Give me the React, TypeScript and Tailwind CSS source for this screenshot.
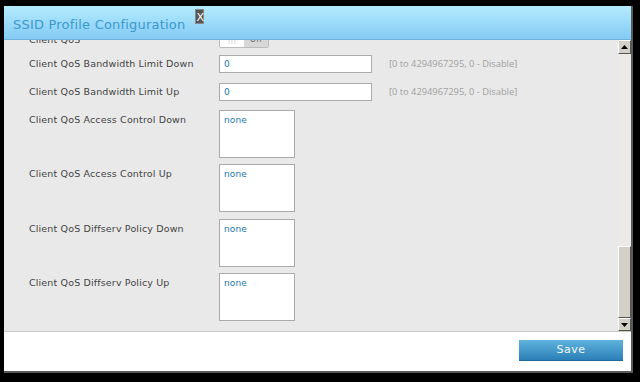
import React from 'react';

const font = { fontFamily: '"DejaVu Sans", Verdana, sans-serif' };

const textRows = [
  { label: 'Client QoS Bandwidth Limit Down', value: '0', mt: 'mt-[3px]' },
  { label: 'Client QoS Bandwidth Limit Up', value: '0', mt: 'mt-[10px]' },
];

const boxRows = [
  { label: 'Client QoS Access Control Down', mt: 'mt-[9px]' },
  { label: 'Client QoS Access Control Up', mt: 'mt-[6px]' },
  { label: 'Client QoS Diffserv Policy Down', mt: 'mt-[7px]' },
  { label: 'Client QoS Diffserv Policy Up', mt: 'mt-[6px]' },
];

function Arrow({ up }: { up?: boolean }) {
  return (
    <svg width="7" height="4" viewBox="0 0 7 4">
      {up ? <polygon points="3.5,0 7,4 0,4" fill="#000" /> : <polygon points="0,0 7,0 3.5,4" fill="#000" />}
    </svg>
  );
}

export default function App() {
  return (
    <div className="w-[640px] h-[382px] bg-black pt-[6px] pl-[4px]" style={font}>
      <div className="w-[629px] h-[367px] flex flex-col bg-white border-r-2 border-b-2 border-[#5a5a5a]">
        {/* Title bar */}
        <div className="h-[34px] flex items-start bg-gradient-to-b from-[#b4ecfe] to-[#84caf4] border-b border-[#6fb3dc]">
          <span className="ml-[9px] mt-[10px] text-[13px] leading-[17px] tracking-[0.2px] text-[#3b99cf]">
            SSID Profile Configuration
          </span>
          <span className="ml-[10px] mt-[3px] w-[9px] h-[15px] bg-[#555] text-white text-[11px] leading-[15px] text-center border border-[#888]">
            X
          </span>
        </div>

        {/* Scroll area */}
        <div className="flex h-[292px] bg-[#e9e9e9] border-b border-[#c8c8c8]">
          <div className="flex-1 overflow-hidden">
            <div className="-mt-[12px] pl-[25px] flex flex-col text-[9.5px] text-[#444] tracking-[0.15px]">
              <div className="h-[24px] flex items-center">
                <span className="w-[190px]">Client QoS</span>
                <div className="flex h-[16px] border border-[#bbb] rounded-[2px] overflow-hidden">
                  <span className="w-[24px] bg-white text-[#ccc] text-[8px] leading-[14px] text-center">|||</span>
                  <span className="w-[24px] bg-[#d8d8d8] text-[#666] text-[8px] leading-[14px] text-center">Off</span>
                </div>
              </div>
              {textRows.map((r) => (
                <div key={r.label} className={`${r.mt} h-[18px] flex items-center`}>
                  <span className="w-[190px]">{r.label}</span>
                  <div className="w-[153px] h-[18px] bg-white border border-[#aaa] text-[9px] leading-[16px] text-[#2176ae] pl-[4px]">
                    {r.value}
                  </div>
                  <span className="ml-[17px] text-[#a0a0a0] tracking-normal" style={{ fontFamily: '"Open Sans", sans-serif', fontSize: '9.3px' }}>
                    [0 to 4294967295, 0 - Disable]
                  </span>
                </div>
              ))}
              {boxRows.map((r) => (
                <div key={r.label} className={`${r.mt} h-[48px] flex items-start`}>
                  <span className="w-[190px] pt-[4px] leading-[12px]">{r.label}</span>
                  <div className="w-[76px] h-[48px] bg-white border border-[#aaa] text-[9px] leading-[12px] text-[#2176ae] pl-[4px] pt-[3px]">
                    none
                  </div>
                </div>
              ))}
            </div>
          </div>
          {/* Scrollbar */}
          <div className="w-[13px] flex flex-col bg-[#ebeae7]">
            <div className="h-[14px] flex items-center justify-center bg-[#d4d0c8] border-r border-b border-[#555] border-l border-t border-l-white border-t-white">
              <Arrow up />
            </div>
            <div className="flex-1 flex flex-col justify-end">
              <div className="h-[72px] bg-[#d4d0c8] border-r border-b border-[#555] border-l border-t border-l-white border-t-white" />
            </div>
            <div className="h-[13px] flex items-center justify-center bg-[#d4d0c8] border-r border-b border-[#555] border-l border-t border-l-white border-t-white">
              <Arrow />
            </div>
          </div>
        </div>

        {/* Footer */}
        <div className="flex-1 flex justify-end items-start pt-[8px] pr-[8px]">
          <button className="w-[104px] h-[21px] bg-gradient-to-b from-[#5fb3dd] to-[#2a7fb6] border-b border-[#1f6aa0] text-[#f2f8fc] text-[11px] tracking-[0.5px]">
            Save
          </button>
        </div>
      </div>
    </div>
  );
}
